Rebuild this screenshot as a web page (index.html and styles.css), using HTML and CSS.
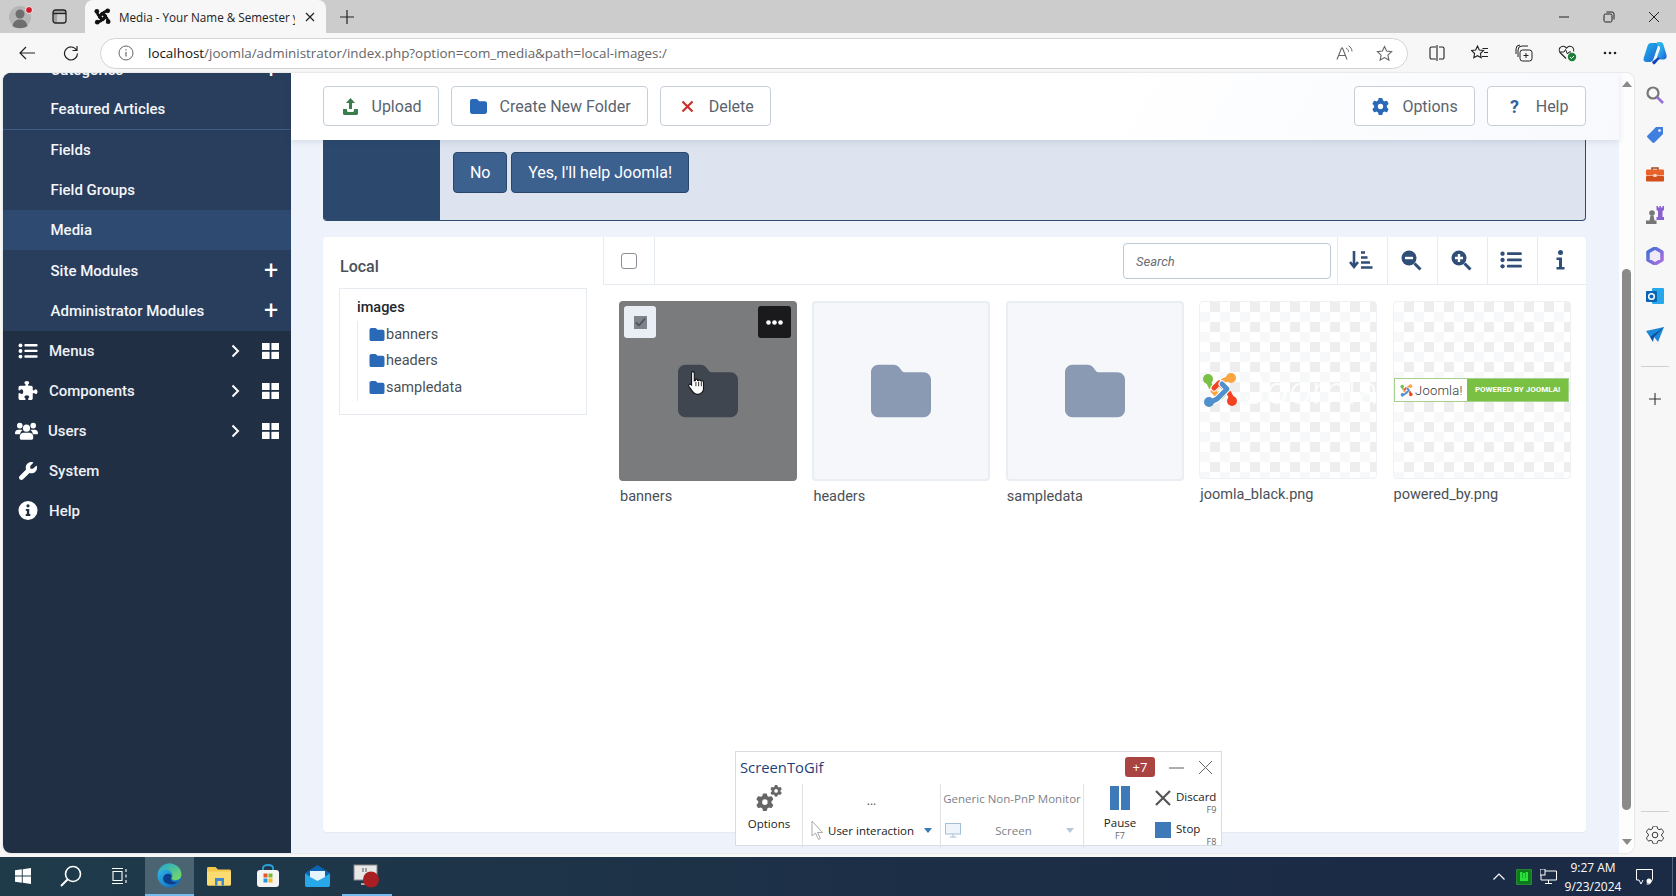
FILE: index.html
```html
<!DOCTYPE html>
<html lang="en">
<head>
<meta charset="utf-8">
<title>Media - Your Name &amp; Semester</title>
<link rel="stylesheet" href="styles.css">
</head>
<body>
<svg class="sprite" aria-hidden="true">
  <defs>
    <linearGradient id="edge-grad" x1="0" y1="0" x2="1" y2="1"><stop offset="0" stop-color="#35c1f1"/><stop offset="1" stop-color="#0a5fb4"/></linearGradient>
    <linearGradient id="edge-top" x1="0" y1="0" x2="1" y2="1"><stop offset="0" stop-color="#1ba5d8"/><stop offset="1" stop-color="#7fdc5a"/></linearGradient>
    <linearGradient id="cop-a" x1="0" y1="0" x2="1" y2="1"><stop offset="0" stop-color="#1db8e8"/><stop offset="1" stop-color="#1e5fd8"/></linearGradient>
    <linearGradient id="cop-b" x1="0" y1="0" x2="1" y2="1"><stop offset="0" stop-color="#25c8e0"/><stop offset=".5" stop-color="#2a9fe8"/><stop offset="1" stop-color="#1b5ad8"/></linearGradient>
    <linearGradient id="m365" x1="0" y1="0" x2="1" y2="1"><stop offset="0" stop-color="#3d6fd8"/><stop offset="1" stop-color="#b06ee0"/></linearGradient>
    <symbol id="i-folder" viewBox="0 0 512 512"><path d="M64 480H448c35.3 0 64-28.7 64-64V160c0-35.3-28.7-64-64-64H288c-10.1 0-19.6-4.7-25.6-12.8L243.2 57.6C231.1 41.5 212.1 32 192 32H64C28.7 32 0 60.7 0 96V416c0 35.3 28.7 64 64 64z"/></symbol>
    <symbol id="i-gear" viewBox="0 0 512 512"><path d="M495.9 166.6c3.2 8.7 .5 18.4-6.4 24.6l-43.3 39.4c1.1 8.3 1.7 16.8 1.7 25.4s-.6 17.1-1.7 25.4l43.3 39.4c6.9 6.2 9.6 15.9 6.4 24.6c-4.4 11.9-9.7 23.3-15.8 34.3l-4.7 8.1c-6.6 11-14 21.4-22.1 31.2c-5.9 7.2-15.7 9.6-24.5 6.8l-55.7-17.7c-13.4 10.3-28.2 18.9-44 25.4l-12.5 57.1c-2 9.1-9 16.3-18.2 17.8c-13.8 2.3-28 3.5-42.5 3.5s-28.7-1.2-42.5-3.5c-9.2-1.5-16.2-8.7-18.2-17.8l-12.5-57.1c-15.8-6.5-30.6-15.1-44-25.4L83.1 425.9c-8.8 2.8-18.6 .3-24.5-6.8c-8.1-9.8-15.5-20.2-22.1-31.2l-4.7-8.1c-6.1-11-11.4-22.4-15.8-34.3c-3.2-8.7-.5-18.4 6.4-24.6l43.3-39.4C64.6 273.1 64 264.6 64 256s.6-17.1 1.7-25.4L22.4 191.2c-6.9-6.2-9.6-15.9-6.4-24.6c4.4-11.9 9.7-23.3 15.8-34.3l4.7-8.1c6.6-11 14-21.4 22.1-31.2c5.9-7.2 15.7-9.6 24.5-6.8l55.7 17.7c13.4-10.3 28.2-18.9 44-25.4l12.5-57.1c2-9.1 9-16.3 18.2-17.8C227.3 1.2 241.5 0 256 0s28.7 1.2 42.5 3.5c9.2 1.5 16.2 8.7 18.2 17.8l12.5 57.1c15.8 6.5 30.6 15.1 44 25.4l55.7-17.7c8.8-2.8 18.6-.3 24.5 6.8c8.1 9.8 15.5 20.2 22.1 31.2l4.7 8.1c6.1 11 11.4 22.4 15.8 34.3zM256 336a80 80 0 1 0 0-160 80 80 0 1 0 0 160z"/></symbol>
    <symbol id="i-list" viewBox="0 0 24 20"><circle cx="2.6" cy="3" r="2.4"/><circle cx="2.6" cy="10" r="2.4"/><circle cx="2.6" cy="17" r="2.4"/><rect x="7.5" y="1.4" width="16.5" height="3" rx="1"/><rect x="7.5" y="8.4" width="16.5" height="3" rx="1"/><rect x="7.5" y="15.4" width="16.5" height="3" rx="1"/></symbol>
    <symbol id="i-puzzle" viewBox="0 0 512 512"><path d="M192 104.8c0-9.2-5.8-17.3-13.2-22.8C167.2 73.3 160 61.3 160 48c0-26.5 28.7-48 64-48s64 21.5 64 48c0 13.3-7.2 25.3-18.8 34c-7.4 5.5-13.2 13.6-13.2 22.8v0c0 12.8 10.4 23.2 23.2 23.2H336c26.5 0 48 21.5 48 48v56.8c0 12.8 10.4 23.2 23.2 23.2v0c9.2 0 17.3-5.8 22.8-13.2c8.7-11.6 20.7-18.8 34-18.8c26.5 0 48 28.7 48 64s-21.5 64-48 64c-13.3 0-25.3-7.2-34-18.8c-5.5-7.4-13.6-13.2-22.8-13.2v0c-12.8 0-23.2 10.4-23.2 23.2V464c0 26.5-21.5 48-48 48H279.2c-12.8 0-23.2-10.4-23.2-23.2v0c0-9.2 5.8-17.3 13.2-22.8c11.6-8.7 18.8-20.7 18.8-34c0-26.5-28.7-48-64-48s-64 21.5-64 48c0 13.3 7.2 25.3 18.8 34c7.4 5.5 13.2 13.6 13.2 22.8v0c0 12.8-10.4 23.2-23.2 23.2H48c-26.5 0-48-21.5-48-48V343.2C0 330.4 10.4 320 23.2 320v0c9.2 0 17.3 5.8 22.8 13.2C54.7 344.8 66.7 352 80 352c26.5 0 48-28.7 48-64s-21.5-64-48-64c-13.3 0-25.3 7.2-34 18.8C40.5 250.2 32.4 256 23.2 256v0C10.4 256 0 245.6 0 232.8V176c0-26.5 21.5-48 48-48H168.8c12.8 0 23.2-10.4 23.2-23.2v0z"/></symbol>
    <symbol id="i-users" viewBox="0 0 24 18"><circle cx="5" cy="3.4" r="2.9"/><circle cx="19" cy="3.4" r="2.9"/><circle cx="12" cy="6" r="3.7"/><path d="M0 11c0-2 1.400-3.400 3.400-3.400h3c.6 0 1.100.1 1.600.4-1.500 1-2.500 2.700-2.600 4.500H1c-.6 0-1-.4-1-1.500zM24 11c0-2-1.400-3.400-3.400-3.400h-3c-.6 0-1.100.1-1.600.4 1.500 1 2.500 2.700 2.600 4.500H23c.6 0 1-.4 1-1.500zM9 10.800h6c2.300 0 4 1.800 4 4V16.500c0 .8-.6 1.500-1.400 1.500H6.400C5.600 18 5 17.300 5 16.500V14.800c0-2.200 1.700-4 4-4z"/></symbol>
    <symbol id="i-wrench" viewBox="0 0 512 512"><path d="M352 320c88.400 0 160-71.600 160-160c0-15.300-2.200-30.100-6.200-44.200c-3.100-10.800-16.400-13.200-24.300-5.300l-76.800 76.800c-3 3-7.100 4.700-11.300 4.700H336c-8.800 0-16-7.200-16-16V118.600c0-4.200 1.700-8.300 4.700-11.300l76.800-76.800c7.900-7.900 5.400-21.200-5.300-24.300C382.100 2.200 367.300 0 352 0C263.600 0 192 71.600 192 160c0 19.100 3.400 37.500 9.500 54.500L19.900 396.100C7.200 408.800 0 426.100 0 444.100C0 481.600 30.400 512 67.900 512c18 0 35.300-7.200 48-19.900L297.500 310.500c17 6.200 35.400 9.500 54.500 9.500z"/></symbol>
    <symbol id="i-info" viewBox="0 0 20 20"><path fill-rule="evenodd" d="M10 0a10 10 0 1 1 0 20a10 10 0 0 1 0-20zM10 3.400a1.700 1.700 0 1 0 0 3.400a1.700 1.700 0 0 0 0-3.400zM7.600 8.400v1.900h1.200v3.500H7.600v1.900h4.900v-1.900h-1.200V8.400z"/></symbol>
    <symbol id="i-grid" viewBox="0 0 17 16"><rect width="7.600" height="7"/><rect x="9.400" width="7.600" height="7"/><rect y="8.800" width="7.600" height="7.200"/><rect x="9.400" y="8.800" width="7.600" height="7.200"/></symbol>
    <symbol id="joomla" viewBox="0 0 36 36"><g fill="none" stroke-linejoin="round" stroke-linecap="round"><path stroke="#fff" stroke-width="7" d="M6 9L9 15L19 25L24 20"/><path stroke="#7ac143" stroke-width="5" d="M6 9L9 15L19 25L24 20"/><path stroke="#fff" stroke-width="7" d="M27 6L21 9L11 19L16 24"/><path stroke="#f9a541" stroke-width="5" d="M27 6L21 9L11 19L16 24"/><path stroke="#fff" stroke-width="7" d="M30 27L27 21L17 11L12 16"/><path stroke="#f44321" stroke-width="5" d="M30 27L27 21L17 11L12 16"/><path stroke="#fff" stroke-width="7" d="M9 30L15 27L25 17L20 12"/><path stroke="#5091cd" stroke-width="5" d="M9 30L15 27L25 17L20 12"/></g><circle cx="6" cy="7" r="5" fill="#7ac143"/><circle cx="29" cy="6" r="5" fill="#f9a541"/><circle cx="30" cy="29" r="5" fill="#f44321"/><circle cx="7" cy="30" r="5" fill="#5091cd"/></symbol>
    <symbol id="joomla-mono" viewBox="0 0 36 36"><g fill="none" stroke-linejoin="round" stroke-linecap="round" stroke="#111" stroke-width="5.500"><path d="M6 9L9 15L19 25L24 20"/><path d="M27 6L21 9L11 19L16 24"/><path d="M30 27L27 21L17 11L12 16"/><path d="M9 30L15 27L25 17L20 12"/></g><circle cx="6" cy="7" r="5" fill="#111"/><circle cx="29" cy="6" r="5" fill="#111"/><circle cx="30" cy="29" r="5" fill="#111"/><circle cx="7" cy="30" r="5" fill="#111"/></symbol>
  </defs>
</svg>

<div class="titlebar">
  <div class="profile">
    <svg width="26" height="28" viewBox="0 0 26 28"><circle cx="11" cy="14" r="11" fill="#b5b5b5"/><circle cx="11" cy="11" r="4.500" fill="#6e6e6e"/><path d="M3.500 23c1-5 4-6.500 7.500-6.500s6.500 1.500 7.500 6.500c-4 3-11 3-15 0z" fill="#6e6e6e"/><circle cx="20" cy="7" r="3.500" fill="#d01c2a" stroke="#eee"/></svg>
  </div>
  <div class="tab-btn">
    <svg width="15" height="15" viewBox="0 0 15 15"><rect x="1" y="1" width="13" height="13" rx="2.500" fill="none" stroke="#222" stroke-width="1.300"/><path d="M1 4.500h13" stroke="#222" stroke-width="1.300" fill="none"/><path d="M1 3.500a2.500 2.500 0 0 1 2.500-2.500h8a2.500 2.500 0 0 1 2.500 2.500v1H5v9.500H3.500A2.500 2.500 0 0 1 1 11.500z" fill="#222" fill-opacity=".25"/></svg>
  </div>
  <div class="tab">
    <svg class="tab-logo" width="17" height="17"><use href="#joomla-mono"/></svg>
    <span class="tab-title">Media - Your Name &amp; Semester y</span>
    <svg class="tab-close" width="10" height="10" viewBox="0 0 10 10"><path d="M1 1l8 8M9 1l-8 8" stroke="#222" stroke-width="1.200"/></svg>
  </div>
  <svg class="new-tab" width="14" height="14" viewBox="0 0 14 14"><path d="M7 0v14M0 7h14" stroke="#222" stroke-width="1.200"/></svg>
  <div class="win-controls">
    <svg width="12" height="12" viewBox="0 0 12 12"><path d="M1 6h10" stroke="#222" stroke-width="1"/></svg>
    <svg width="12" height="12" viewBox="0 0 12 12"><rect x="1" y="3" width="8" height="8" rx="1.500" fill="none" stroke="#222"/><path d="M3.500 1h5.500a2 2 0 0 1 2 2v5.500" fill="none" stroke="#222"/></svg>
    <svg width="12" height="12" viewBox="0 0 12 12"><path d="M1 1l10 10M11 1L1 11" stroke="#222" stroke-width="1"/></svg>
  </div>
</div>

<div class="navbar">
  <svg class="nav-back" width="16" height="14" viewBox="0 0 16 14"><path d="M7 1L1 7l6 6M1 7h15" fill="none" stroke="#222" stroke-width="1.200"/></svg>
  <svg class="nav-reload" width="16" height="16" viewBox="0 0 16 16"><path d="M13.500 5A6.500 6.500 0 1 0 14.500 8.500M14 1v4.500H9.500" fill="none" stroke="#222" stroke-width="1.200"/></svg>
  <div class="addressbar">
    <svg class="addr-info" width="16" height="16" viewBox="0 0 16 16"><circle cx="8" cy="8" r="7" fill="none" stroke="#666"/><path d="M8 7v4.500M8 4.200v1.300" stroke="#666" stroke-width="1.200"/></svg>
    <span class="url"><span class="url-host">localhost</span>/joomla/administrator/index.php?option=com_media&amp;path=local-images:/</span>
    <svg class="addr-read" width="17" height="16" viewBox="0 0 17 16"><path d="M1 14.500L5.500 3h1L11 14.500M2.800 10.500h6.400" fill="none" stroke="#666" stroke-width="1.100"/><path d="M10 3c1.500.8 2.500 2 2.500 3.800M12.500 .8c2 1.200 3.500 3.200 3.500 5.700" fill="none" stroke="#666"/></svg>
    <svg class="addr-star" width="17" height="17" viewBox="0 0 17 17"><path d="M8.500 1.500l2.100 4.600 5 .6-3.700 3.400 1 5-4.400-2.500-4.400 2.500 1-5L1.400 6.700l5-.6z" fill="none" stroke="#666" stroke-width="1.100"/></svg>
  </div>
  <div class="nav-tools">
    <svg width="16" height="16" viewBox="0 0 16 16"><path d="M7 2H2.500A1.500 1.500 0 0 0 1 3.500v9A1.500 1.500 0 0 0 2.500 14H7M10 2h3.500A1.500 1.500 0 0 1 15 3.500v9a1.500 1.500 0 0 1-1.500 1.500H10M8 0v16" fill="none" stroke="#222" stroke-width="1.100"/></svg>
    <svg width="18" height="16" viewBox="0 0 18 16"><path d="M6.500 1l1.800 4 4.200.5-3.100 3 .8 4.300-3.700-2.100-3.700 2.100.8-4.300-3.100-3 4.200-.5z" fill="none" stroke="#222" stroke-width="1.100"/><path d="M11.500 3.500H17M13 7.500h4M11 11.500h6" stroke="#222"/></svg>
    <svg width="18" height="18" viewBox="0 0 18 18"><rect x="5" y="6" width="12" height="11" rx="2.500" fill="none" stroke="#222"/><path d="M11 9v5M8.500 11.500h5" stroke="#222"/><path d="M3 13V6a4 4 0 0 1 4-4h6" fill="none" stroke="#222"/><path d="M1 10V5a4 4 0 0 1 4-4" fill="none" stroke="#222"/></svg>
    <svg width="19" height="18" viewBox="0 0 19 18"><path d="M8 14.500L2.500 9C1 7.500.8 5 2.200 3.500c1.500-1.700 4-1.700 5.500-.2l.8.800.8-.8c1.500-1.500 4-1.500 5.500.2 1 1.100 1.200 2.600.8 4" fill="none" stroke="#222" stroke-width="1.100"/><path d="M2 8h4l1.500-2.500 2 4.500 1.500-2h2" fill="none" stroke="#222"/><circle cx="14" cy="13" r="4.200" fill="#1a7f37"/><path d="M12 13l1.500 1.500 2.500-2.500" fill="none" stroke="#fff"/></svg>
    <svg width="14" height="4" viewBox="0 0 14 4"><circle cx="2" cy="2" r="1.300" fill="#222"/><circle cx="7" cy="2" r="1.300" fill="#222"/><circle cx="12" cy="2" r="1.300" fill="#222"/></svg>
    <svg width="24" height="24" viewBox="0 0 24 24"><path d="M8 2h5c2 0 2.500 1 2 2.500L10.500 18c-.7 2-2 3-4 3H3.500c-2.500 0-3.500-2-2.800-4L4.500 5c.6-1.800 1.800-3 3.500-3z" fill="url(#cop-a)"/><path d="M14 1h3c2 0 3 1 3.500 3l3 10c.6 2.500-.6 4.500-3 4.500h-5c-1.500 0-2-1-1.500-2.500l3-8c.4-1.500-.5-3-2.500-3.500z" fill="url(#cop-b)"/><path d="M9 21l5-4c1-.8 2-.6 3 0l-5 6c-1 .8-2 .3-3-2z" fill="#1144b8"/></svg>
  </div>
</div>

<div class="desktop-area">
  <div class="window">
    <aside class="sidebar">
      <nav class="submenu">
        <a class="sub-item">Categories<span class="plus">+</span></a>
        <a class="sub-item sub-line">Featured Articles</a>
        <a class="sub-item">Fields</a>
        <a class="sub-item">Field Groups</a>
        <a class="sub-item sub-active">Media</a>
        <a class="sub-item">Site Modules<span class="plus">+</span></a>
        <a class="sub-item">Administrator Modules<span class="plus">+</span></a>
      </nav>
      <nav class="mainmenu">
        <a class="main-item"><svg class="side-icon" width="19" height="16"><use href="#i-list"/></svg><span class="main-label">Menus</span>
          <svg class="chev" width="9" height="14" viewBox="0 0 9 14"><path d="M1.500 1.500L7 7l-5.500 5.500" fill="none" stroke="#fff" stroke-width="2"/></svg>
          <svg class="grid-ic" width="17" height="16"><use href="#i-grid"/></svg></a>
        <a class="main-item"><svg class="side-icon" width="19" height="19"><use href="#i-puzzle"/></svg><span class="main-label">Components</span>
          <svg class="chev" width="9" height="14" viewBox="0 0 9 14"><path d="M1.500 1.500L7 7l-5.500 5.500" fill="none" stroke="#fff" stroke-width="2"/></svg>
          <svg class="grid-ic" width="17" height="16"><use href="#i-grid"/></svg></a>
        <a class="main-item"><svg class="side-icon users-ic" width="23" height="18"><use href="#i-users"/></svg><span class="main-label">Users</span>
          <svg class="chev" width="9" height="14" viewBox="0 0 9 14"><path d="M1.500 1.500L7 7l-5.500 5.500" fill="none" stroke="#fff" stroke-width="2"/></svg>
          <svg class="grid-ic" width="17" height="16"><use href="#i-grid"/></svg></a>
        <a class="main-item"><svg class="side-icon" width="18" height="18"><use href="#i-wrench"/></svg><span class="main-label">System</span></a>
        <a class="main-item"><svg class="side-icon" width="19" height="19"><use href="#i-info"/></svg><span class="main-label">Help</span></a>
      </nav>
    </aside>

    <main class="main">
      <header class="actions">
        <button class="btn"><svg class="ic-upload" width="17" height="17" viewBox="0 0 17 17"><path d="M8.500 0l4.500 5H10v6H7V5H4z" fill="#3a7d4f"/><path d="M1 11h4v1.500c0 .8.700 1.500 1.500 1.500h4c.8 0 1.500-.7 1.500-1.500V11h3.300c.4 0 .7.300.7.700V15.500c0 .8-.7 1.500-1.500 1.500h-12C1.700 17 1 16.300 1 15.500z" fill="#3a7d4f"/></svg>Upload</button>
        <button class="btn"><svg class="ic-blue" width="17" height="17"><use href="#i-folder"/></svg>Create New Folder</button>
        <button class="btn"><svg width="17" height="17" viewBox="0 0 17 17"><path d="M3.500 3.500l10 10M13.500 3.500l-10 10" stroke="#c9302c" stroke-width="2.200"/></svg>Delete</button>
        <div class="actions-right">
          <button class="btn"><svg class="ic-blue" width="17" height="17"><use href="#i-gear"/></svg>Options</button>
          <button class="btn"><svg width="17" height="17" viewBox="0 0 17 17"><text x="4" y="15" class="help-q">?</text></svg>Help</button>
        </div>
      </header>

      <section class="alert">
        <div class="alert-side"></div>
        <div class="alert-body">
          <button class="alert-btn">No</button>
          <button class="alert-btn">Yes, I'll help Joomla!</button>
        </div>
      </section>

      <section class="card">
        <div class="tree-col">
          <h2 class="tree-title">Local</h2>
          <div class="tree">
            <div class="tree-root">images</div>
            <ul class="tree-list">
              <li class="tree-row"><svg class="ic-tree" width="16" height="15"><use href="#i-folder"/></svg>banners</li>
              <li class="tree-row"><svg class="ic-tree" width="16" height="15"><use href="#i-folder"/></svg>headers</li>
              <li class="tree-row"><svg class="ic-tree" width="16" height="15"><use href="#i-folder"/></svg>sampledata</li>
            </ul>
          </div>
        </div>
        <div class="browser">
          <div class="browser-bar">
            <div class="check-cell"><span class="checkbox"></span></div>
            <div class="crumb"></div>
            <input class="search" type="text" placeholder="Search">
            <div class="tool"><svg width="24" height="20" viewBox="0 0 24 20"><path d="M5 1v15M1 12l4 5 4-5" fill="none" stroke="#2f4e78" stroke-width="2.600"/><path d="M12 2.500h4M12 7.500h6.500M12 12.500h9M12 17.500h11.500" stroke="#2f4e78" stroke-width="2.400"/></svg></div>
            <div class="tool"><svg width="22" height="22" viewBox="0 0 22 22"><circle cx="9" cy="9" r="7.500" fill="#2f4e78"/><path d="M5 9h8" stroke="#fff" stroke-width="2.400"/><path d="M14.500 14.500L20.500 20.500" stroke="#2f4e78" stroke-width="3"/></svg></div>
            <div class="tool"><svg width="22" height="22" viewBox="0 0 22 22"><circle cx="9" cy="9" r="7.500" fill="#2f4e78"/><path d="M5 9h8M9 5v8" stroke="#fff" stroke-width="2.400"/><path d="M14.500 14.500L20.500 20.500" stroke="#2f4e78" stroke-width="3"/></svg></div>
            <div class="tool"><svg class="ic-navy" width="22" height="18"><use href="#i-list"/></svg></div>
            <div class="tool tool-last"><svg width="9" height="20" viewBox="0 0 9 20"><circle cx="4.500" cy="2.600" r="2.500" fill="#2f4e78"/><path d="M.5 7.500h5.500v9.500h2.500v2.500H.5V17H3V10H.5z" fill="#2f4e78"/></svg></div>
          </div>
          <div class="items">
            <figure class="item">
              <div class="thumb thumb-folder thumb-selected">
                <span class="item-check"><svg width="13" height="13" viewBox="0 0 13 13"><rect width="13" height="13" fill="#7f838c"/><path d="M2 6.500l3 3 6-7" fill="none" stroke="#4f545c" stroke-width="1.800"/></svg></span>
                <span class="item-menu"><svg width="17" height="5" viewBox="0 0 17 5"><circle cx="2.500" cy="2.500" r="2.300" fill="#fff"/><circle cx="8.500" cy="2.500" r="2.300" fill="#fff"/><circle cx="14.500" cy="2.500" r="2.300" fill="#fff"/></svg></span>
                <svg class="folder-big" width="60" height="60"><use href="#i-folder"/></svg>
                <svg class="hand" width="20" height="26" viewBox="0 0 18 24"><path d="M5 1.500c.8 0 1.500.7 1.500 1.500v7l1-.3V9c0-.8 1.800-.8 2 0v.7l1 .1c.3-.8 1.800-.7 2 .2l1 .3c.6-.4 1.500 0 1.500 1V17c0 2.500-2 5.500-5 5.500H9c-2 0-3-1-4-2.500l-3.500-5c-.8-1.500 1-2.500 2-1.500l.5.500V3c0-.8.200-1.500 1-1.500z" fill="#fff" stroke="#111" stroke-width="1"/><path d="M8 11v4M10.500 11v4M13 11v4" stroke="#111" stroke-width=".8"/></svg>
              </div>
              <figcaption class="caption">banners</figcaption>
            </figure>
            <figure class="item">
              <div class="thumb thumb-folder"><svg class="folder-big" width="60" height="60"><use href="#i-folder"/></svg></div>
              <figcaption class="caption">headers</figcaption>
            </figure>
            <figure class="item">
              <div class="thumb thumb-folder"><svg class="folder-big" width="60" height="60"><use href="#i-folder"/></svg></div>
              <figcaption class="caption">sampledata</figcaption>
            </figure>
            <figure class="item">
              <div class="thumb thumb-image">
                <svg class="jl-logo" width="36" height="36"><use href="#joomla"/></svg>
                <span class="jl-ghost">Joomla!</span>
              </div>
              <figcaption class="caption">joomla_black.png</figcaption>
            </figure>
            <figure class="item">
              <div class="thumb thumb-image">
                <div class="powered">
                  <div class="powered-left"><svg width="13" height="13"><use href="#joomla"/></svg><span class="powered-word">Joomla!</span></div>
                  <div class="powered-right">POWERED BY JOOMLA!</div>
                </div>
              </div>
              <figcaption class="caption">powered_by.png</figcaption>
            </figure>
          </div>
        </div>
      </section>
    </main>

    <div class="scrollbar">
      <span class="arrow-up"></span>
      <span class="scroll-thumb"></span>
      <span class="arrow-down"></span>
    </div>
  </div>

  <aside class="edge-rail">
    <svg width="18" height="18" viewBox="0 0 18 18"><circle cx="7" cy="7" r="5.500" fill="none" stroke="#777" stroke-width="2.200"/><path d="M11 11l6 6" stroke="#9a6ed8" stroke-width="2.600"/></svg>
    <svg width="18" height="18" viewBox="0 0 18 18"><path d="M10 1h6.500c.4 0 .5.200.5.500V8L8.500 16.500c-.6.600-1.400.6-2 0L1.500 11.500c-.6-.6-.6-1.400 0-2z" fill="#3f7fe0"/><circle cx="13.500" cy="4.500" r="1.300" fill="#fff"/></svg>
    <svg width="18" height="16" viewBox="0 0 18 16"><path d="M6 4V2h6v2" fill="none" stroke="#a34a1f" stroke-width="1.500"/><rect y="3.500" width="18" height="6" rx="1" fill="#e8622a"/><rect y="10" width="18" height="5.500" rx="1" fill="#d24f1c"/><rect x="7.500" y="8" width="3" height="3" fill="#ffd9c2"/></svg>
    <svg width="18" height="20" viewBox="0 0 18 20"><circle cx="6" cy="8" r="2.800" fill="#777"/><path d="M4.500 10.500h3l1 5h2v3.500H0v-3.500h3.500z" fill="#777"/><path d="M10.500 1h1.500v1.500h1.500V1H15v1.500h1.500V1H18v4l-1.500 1v6H18v3h-7.500v-3H12V6l-1.500-1z" fill="#8a5fd0"/></svg>
    <svg width="18" height="18" viewBox="0 0 18 18"><path d="M9 1l7 4v8l-7 4-7-4V5z" fill="#f0eaf8" stroke="url(#m365)" stroke-width="3.500" stroke-linejoin="round"/></svg>
    <svg width="18" height="18" viewBox="0 0 18 18"><rect x="6" y="1" width="12" height="16" rx="1" fill="#28a8ea"/><rect y="4" width="11" height="11" rx="1" fill="#0a64b4"/><circle cx="5.500" cy="9.500" r="2.800" fill="none" stroke="#fff" stroke-width="1.500"/></svg>
    <svg width="18" height="16" viewBox="0 0 18 16"><path d="M0 4L18 0 12 15 8 10 4 10z" fill="#1e88d8"/><path d="M4 10L18 0 8 10l-1 5z" fill="#0b4f9c"/></svg>
    <span class="rail-sep"></span>
    <svg class="rail-plus" width="14" height="14" viewBox="0 0 14 14"><path d="M7 1v12M1 7h12" stroke="#333" stroke-width="1.100"/></svg>
    <span class="rail-sep rail-sep-bottom"></span>
    <svg class="rail-gear" width="18" height="18"><use href="#i-gear" class="ic-outline"/></svg>
  </aside>

  <div class="recorder">
    <div class="rec-head">
      <span class="rec-title">ScreenToGif</span>
      <span class="rec-badge">+7</span>
      <svg width="15" height="15" viewBox="0 0 15 15"><path d="M0 8h15" stroke="#777" stroke-width="1.200"/></svg>
      <svg width="15" height="15" viewBox="0 0 15 15"><path d="M1 1l13 13M14 1L1 14" stroke="#666"/></svg>
    </div>
    <div class="rec-body">
      <div class="rec-sec rec-options">
        <svg width="26" height="26" viewBox="0 0 22 22" class="ic-gray"><use href="#i-gear" x="0" y="7" width="15" height="15"/><use href="#i-gear" x="12" y="0" width="10" height="10"/></svg>
        <span class="rec-label">Options</span>
      </div>
      <div class="rec-sec rec-capture">
        <span class="rec-dots">...</span>
        <div class="rec-line">
          <svg width="13" height="20" viewBox="0 0 13 20"><path d="M1 1v15l3.500-3 3 6.500 2-1-3-6h5z" fill="#fff" stroke="#aaa"/></svg>
          <span class="rec-user">User interaction</span>
          <span class="tri tri-blue"></span>
        </div>
      </div>
      <div class="rec-sec rec-monitor">
        <span class="rec-gray rec-gen">Generic Non-PnP Monitor</span>
        <div class="rec-line">
          <svg width="16" height="15" viewBox="0 0 16 15"><rect x=".5" y=".5" width="15" height="10.500" fill="#eef4fa" stroke="#a5bfd6"/><path d="M8 11v3M4.500 14h7" stroke="#a5bfd6"/></svg>
          <span class="rec-gray rec-screen">Screen</span>
          <span class="tri tri-pale"></span>
        </div>
      </div>
      <div class="rec-sec rec-pause">
        <div class="pause-bars"><span class="pause-bar"></span><span class="pause-bar"></span></div>
        <span class="rec-label">Pause</span>
        <span class="rec-key">F7</span>
      </div>
      <div class="rec-sec rec-actions">
        <div class="rec-act">
          <svg width="16" height="16" viewBox="0 0 16 16"><path d="M1 1l14 14M15 1L1 15" stroke="#555" stroke-width="2.200"/></svg>
          <div class="rec-act-text"><span class="rec-label">Discard</span><span class="rec-key">F9</span></div>
        </div>
        <div class="rec-act">
          <span class="stop-sq"></span>
          <div class="rec-act-text"><span class="rec-label">Stop</span><span class="rec-key">F8</span></div>
        </div>
      </div>
    </div>
  </div>
</div>

<footer class="taskbar">
  <div class="task-slot task-start"><svg width="16" height="16" viewBox="0 0 16 16"><path d="M0 2.300L6.800 1.300v6.200H0zM7.700 1.200L16 0v7.500H7.700zM0 8.400h6.800v6.300L0 13.700zM7.700 8.400H16V16l-8.300-1.200z" fill="#fff"/></svg></div>
  <div class="task-slot"><svg width="22" height="22" viewBox="0 0 22 22"><circle cx="13" cy="9" r="7.500" fill="none" stroke="#fff" stroke-width="1.600"/><path d="M7.500 14.500L1 21" stroke="#fff" stroke-width="2"/></svg></div>
  <div class="task-slot"><svg width="16" height="16" viewBox="0 0 16 16"><path d="M0 .5h11M0 15.500h11M1 3.500h9v9H1zM14 1v3M14 6.500v3M14 12v3" fill="none" stroke="#fff" stroke-width="1.100"/></svg></div>
  <div class="task-slot task-active"><svg width="25" height="25" viewBox="0 0 24 24"><circle cx="12" cy="12" r="11.500" fill="url(#edge-grad)"/><path d="M.8 11C2 4.500 7 .5 12 .5c6.500 0 11.500 5 11.500 10.500 0 3.500-3 5.500-6 5.500-2 0-3.500-.8-3.500-1.800 0-.5.800-1 .8-2.700 0-3-2.800-5.500-6-5.500-4 0-7 1.500-8.500 4.500z" fill="url(#edge-top)"/><path d="M8 19c-2.500-2-3-6 0-8 2-1.300 5-.8 6 1 .5 1-.5 1.500-.5 3 0 2.500 3 4 6 3-2 3-7 3.500-11.500 1z" fill="#0c3f8c"/></svg></div>
  <div class="task-slot"><svg width="24" height="20" viewBox="0 0 24 20"><path d="M0 2.500C0 1.500.8 1 1.500 1h7l2.500 2.500h11.500c.8 0 1.500.6 1.500 1.500v13c0 .8-.7 1.500-1.500 1.500h-21C.7 19.500 0 18.800 0 18z" fill="#f5c84b"/><path d="M0 5.500h24V18c0 .8-.7 1.500-1.500 1.500h-21C.7 19.500 0 18.800 0 18z" fill="#fbdc72"/><rect x="8" y="12" width="9" height="7.500" fill="#3f88d0"/><rect x="10.500" y="15" width="4" height="4.500" fill="#fbdc72"/></svg></div>
  <div class="task-slot"><svg width="24" height="24" viewBox="0 0 24 24"><path d="M7 7V4c0-2 2-3 5-3s5 1 5 3v3" fill="none" stroke="#2aa0dc" stroke-width="1.800"/><rect x="1" y="6" width="22" height="17" rx="3" fill="#f4f4f4"/><rect x="7.500" y="9.500" width="4" height="4" fill="#e8562a"/><rect x="12.500" y="9.500" width="4" height="4" fill="#7cb82f"/><rect x="7.500" y="14.500" width="4" height="4" fill="#1d9be0"/><rect x="12.500" y="14.500" width="4" height="4" fill="#f5b921"/></svg></div>
  <div class="task-slot"><svg width="25" height="22" viewBox="0 0 25 22"><path d="M12.500 0L25 8v12c0 1-.8 2-2 2H2c-1.200 0-2-1-2-2V8z" fill="#0a64b4"/><path d="M0 8.500l12.500 7.500L25 8.500V20c0 1-.8 2-2 2H2c-1.200 0-2-1-2-2z" fill="#27a8e8"/><path d="M5 6h15v6l-7.500 4L5 12z" fill="#e6f4fc"/></svg></div>
  <div class="task-slot task-open"><svg width="27" height="24" viewBox="0 0 27 24"><rect x="1" y="1" width="23" height="15" fill="#e8e8e8" stroke="#888"/><path d="M10 4v4M13 4v4" stroke="#555"/><path d="M8 20h8" stroke="#aaa" stroke-width="2"/><circle cx="18" cy="15.500" r="8" fill="#a81e22"/></svg></div>
  <div class="tray">
    <svg class="tray-chev" width="12" height="7" viewBox="0 0 12 7"><path d="M.5 6.500L6 1l5.500 5.500" fill="none" stroke="#fff" stroke-width="1.200"/></svg>
    <svg width="16" height="16" viewBox="0 0 16 16"><rect width="16" height="16" rx="3" fill="#0e7a1c" stroke="#3fa04a" stroke-width=".8"/><path d="M4 3v9h8V3h-2.500v6H9V4H7v5h-.5V3z" fill="#27e03a"/></svg>
    <svg width="17" height="15" viewBox="0 0 17 15"><path d="M4 2h12.500v9H1V2M8.500 11v3M5 14.500h7" fill="none" stroke="#fff"/><rect x="0" y="0" width="5" height="6" fill="#1b2a45" stroke="#fff"/></svg>
    <div class="clock"><span>9:27 AM</span><span>9/23/2024</span></div>
    <svg class="tray-note" width="17" height="16" viewBox="0 0 17 16"><path d="M.5.500h16v10l-3 4.500h-3M.5.500v10.500h2.500l2 4 2-4" fill="none" stroke="#fff"/><circle cx="13" cy="12" r="2.500" fill="#fff"/></svg>
  </div>
</footer>
</body>
</html>
```
FILE: styles.css
```css
* { box-sizing: border-box; }
html, body { margin: 0; padding: 0; }
body {
  width: 1676px;
  height: 896px;
  overflow: hidden;
  display: flex;
  flex-direction: column;
  font-family: Roboto, "Liberation Sans", sans-serif;
  background: #f7f7f7;
  color: #495057;
}
.sprite { position: absolute; width: 0; height: 0; }

/* Browser chrome */
.titlebar {
  height: 33px;
  background: #cccccc;
  display: flex;
  align-items: flex-end;
  flex: none;
}
.profile { width: 46px; height: 33px; padding: 3px 0 0 9px; }
.tab-btn { width: 39px; height: 33px; display: flex; align-items: center; justify-content: center; padding-right: 12px; }
.tab {
  width: 241px;
  height: 33px;
  background: #f7f7f7;
  border-radius: 8px 8px 0 0;
  display: flex;
  align-items: center;
  padding-left: 9px;
  font: 11.7px "Open Sans", "Noto Sans", sans-serif;
  color: #222;
}
.tab-logo { flex: none; margin-right: 8px; }
.tab-title { width: 176px; white-space: nowrap; overflow: hidden; }
.tab-close { margin-left: 10px; flex: none; }
.new-tab { margin: 0 0 9px 14px; }
.win-controls { margin-left: auto; height: 33px; display: flex; align-items: center; padding-right: 16px; gap: 33px; }

.navbar {
  height: 40px;
  background: #f7f7f7;
  flex: none;
  display: flex;
  align-items: center;
}
.nav-back { margin-left: 19px; flex: none; }
.nav-reload { margin-left: 28px; flex: none; }
.addressbar {
  margin-left: 21px;
  width: 1308px;
  height: 31px;
  border: 1px solid #d4d4d4;
  border-radius: 16px;
  background: #fff;
  display: flex;
  align-items: center;
  padding-left: 17px;
  flex: none;
}
.addr-info { flex: none; }
.url { margin-left: 14px; font: 13.4px "Open Sans", "Noto Sans", sans-serif; color: #666; white-space: nowrap; }
.url-host { color: #111; }
.addr-read { margin-left: auto; flex: none; }
.addr-star { margin: 0 14px 0 23px; flex: none; }
.nav-tools { flex: 1; display: flex; align-items: center; justify-content: space-between; padding: 0 9px 0 21px; }

/* Window content */
.desktop-area { position: relative; flex: none; height: 784px; display: flex; }
.window {
  margin: 0 0 4px 3px;
  width: 1631px;
  height: 780px;
  background: #eef3fb;
  border-radius: 8px;
  display: flex;
  overflow: hidden;
  box-shadow: 0 0 2px rgba(0,0,0,.2);
}

.sidebar { width: 288px; background: #212f45; flex: none; overflow: hidden; color: #fff; font-size: 15px; font-weight: 500; }
.submenu { margin-top: -23.5px; background: #293d5c; }
.sub-item { height: 40.2px; display: flex; align-items: center; padding: 0 10px 0 47.5px; color: #f4f6fa; }
.sub-line { border-bottom: 1px solid #3f5c87; }
.sub-active { background: #2f4a70; }
.plus { margin-left: auto; font-size: 25px; font-weight: 400; line-height: 1; width: 20px; text-align: center; color: #fff; }
.mainmenu { display: flex; flex-direction: column; }
.main-item { height: 40px; display: flex; align-items: center; color: #eef1f6; }
.side-icon { width: 20px; margin-left: 15px; fill: #fff; flex: none; }
.users-ic { width: 23px; margin-left: 12px; margin-right: -1px; }
.main-label { margin-left: 11px; flex: 1; }
.chev { flex: none; margin-right: 22px; }
.grid-ic { flex: none; margin-right: 12px; fill: #fff; }

.main { flex: 1; min-width: 0; padding: 0 33px 0 32px; display: flex; flex-direction: column; }
.actions {
  margin: 0 -33px 0 -32px;
  padding: 13px 33px 14px 32px;
  height: 67px;
  flex: none;
  background: linear-gradient(120deg, #fff 60%, #f7f9fd);
  box-shadow: 0 2px 6px rgba(40,60,90,.12);
  display: flex;
  gap: 12px;
  position: relative;
  z-index: 2;
}
.actions-right { margin-left: auto; display: flex; gap: 12px; }
.btn {
  height: 40px;
  border: 1px solid #c6ced9;
  border-radius: 4px;
  background: #fff;
  color: #5a646f;
  font: 16px Roboto, sans-serif;
  display: flex;
  align-items: center;
  gap: 13px;
  padding: 0 16.5px 0 17.5px;
}
.ic-blue { fill: #2a69b8; }
.help-q { font: bold 18px Roboto, sans-serif; fill: #2f5f9e; }

.alert {
  height: 81px;
  flex: none;
  display: flex;
  background: #dde4f0;
  border-bottom: 1px solid #2f4a70;
  border-right: 1px solid #2f4a70;
  border-radius: 0 0 4px 4px;
  overflow: hidden;
}
.alert-side { width: 117px; background: #2c486d; flex: none; }
.alert-body { padding: 12px 0 0 13px; display: flex; gap: 4px; align-items: flex-start; }
.alert-btn {
  height: 41px;
  padding: 0 15.9px;
  background: #3d618f;
  border: 1px solid #2a466b;
  border-radius: 4px;
  color: #fff;
  font: 16px Roboto, sans-serif;
}

.card {
  margin-top: 16px;
  height: 595px;
  flex: none;
  background: #fff;
  border-radius: 4px;
  display: flex;
  box-shadow: 0 1px 2px rgba(40,60,90,.06);
}
.tree-col { width: 280px; padding: 19px 16px 0; flex: none; }
.tree-title { margin: 0 0 10px 1px; font: 500 16px/22px Roboto, sans-serif; color: #495057; }
.tree { height: 127px; border: 1px solid #e6ebf2; padding: 9px 0 0 17px; }
.tree-root { font: 500 14.5px/20px Roboto, sans-serif; color: #22272e; }
.tree-list { list-style: none; margin: 3px 0 0; padding: 0; border-left: 1px solid #e6ebf2; }
.tree-row { height: 26.500px; display: flex; align-items: center; font: 14.5px Roboto, sans-serif; color: #495057; gap: 1px; padding-left: 11px; }
.ic-tree { fill: #2a69b8; flex: none; }

.browser { flex: 1; min-width: 0; display: flex; flex-direction: column; }
.browser-bar { height: 48px; border-bottom: 1px solid #e6ebf2; border-left: 1px solid #e6ebf2; display: flex; align-items: stretch; }
.check-cell { width: 51px; border-right: 1px solid #e6ebf2; display: flex; align-items: center; justify-content: center; flex: none; }
.checkbox { width: 16px; height: 16px; border: 1px solid #8a8f96; border-radius: 3px; background: #fff; }
.crumb { flex: 1; }
.search {
  width: 208px;
  height: 36px;
  margin: 6px 6px 0 0;
  border: 1px solid #bcc8d8;
  border-radius: 4px;
  padding: 0 12px;
  font: italic 13px Roboto, sans-serif;
  color: #666;
  outline: none;
}
.search::placeholder { color: #6a6f76; opacity: 1; }
.tool { width: 50px; border-left: 1px solid #e6ebf2; display: flex; align-items: center; justify-content: center; flex: none; padding: 0 3px 2px 0; }
.tool-last { width: 49px; }
.ic-navy { fill: #2f4e78; }

.items { padding: 16px 0 0 16px; display: grid; grid-template-columns: repeat(5, 178px); column-gap: 15.4px; align-items: start; }
.item { margin: 0; }
.thumb { position: relative; display: flex; align-items: center; justify-content: center; border-radius: 4px; }
.thumb-folder { height: 180px; background: #f5f7fa; border: 2px solid #e9eef5; fill: #8a9ab3; }
.thumb-selected { background: #7a7b7d; border-color: #7a7b7d; fill: #3f4650; }
.folder-big { display: block; }
.thumb-image {
  height: 178px;
  border: 1px solid #eef1f5;
  background-color: #fff;
  background-image: conic-gradient(#eeeeee 25%, #fff 0 50%, #f6f8fa 0 75%, #fff 0);
  background-size: 20px 20px;
  overflow: hidden;
}
.item-check {
  position: absolute; left: 3px; top: 3px;
  width: 32px; height: 32px;
  background: #eaeef5;
  border-radius: 3px;
  display: flex; align-items: center; justify-content: center;
}
.item-menu {
  position: absolute; right: 4px; top: 3px;
  width: 33px; height: 32px;
  background: #1a1a1c;
  border-radius: 3px;
  display: flex; align-items: center; justify-content: center;
}
.hand { position: absolute; left: 66px; top: 67px; }
.caption { margin-top: 6px; font: 14.5px/20px Roboto, sans-serif; color: #495057; padding-left: 1px; white-space: nowrap; }

.jl-logo { position: absolute; left: 2px; top: 70px; }
.jl-ghost { position: absolute; left: 44px; top: 70px; font: 300 38px/38px Roboto, sans-serif; color: rgba(255,255,255,.9); letter-spacing: 1.5px; white-space: nowrap; }
.powered { width: 175px; height: 24px; display: flex; border: 1px solid #a6d08f; background: #fff; }
.powered-left { width: 72px; display: flex; align-items: center; gap: 2px; padding-left: 5px; background: #fff; }
.powered-word { font: 300 13px Roboto, sans-serif; color: #333; letter-spacing: .2px; }
.powered-right { flex: 1; background: #7ac143; color: #fff; font: bold 8px/22px Roboto, sans-serif; text-align: center; white-space: nowrap; }

/* Scrollbar */
.scrollbar { width: 15px; background: #fdfdfd; flex: none; position: relative; }
.arrow-up { position: absolute; left: 3px; top: 8px; border: 5px solid transparent; border-top: 0; border-bottom: 6px solid #8a8a8a; }
.arrow-down { position: absolute; left: 3px; bottom: 8px; border: 5px solid transparent; border-bottom: 0; border-top: 6px solid #8a8a8a; }
.scroll-thumb { position: absolute; left: 3px; top: 196px; width: 9px; height: 541px; background: #8a8a8a; border-radius: 5px; }

.edge-rail { width: 42px; flex: none; display: flex; flex-direction: column; align-items: center; gap: 22.2px; padding-top: 13px; }
.rail-sep { width: 28px; height: 1px; background: #d0d0d0; flex: none; margin-top: 1px; }
.rail-plus { margin-top: 2px; }
.rail-sep-bottom { margin-top: auto; margin-bottom: -8px; }
.rail-gear { margin-bottom: 13px; }
.ic-outline { fill: #f7f7f7; stroke: #333; stroke-width: 28; }

/* ScreenToGif recorder, floating over the page */
.recorder {
  position: absolute;
  left: 735px;
  top: 678px;
  width: 487px;
  height: 95px;
  background: #fff;
  border: 1px solid #d9dce1;
  display: flex;
  flex-direction: column;
  font-family: "Open Sans", "Noto Sans", sans-serif;
  color: #222;
  z-index: 5;
}
.rec-head { height: 30px; flex: none; display: flex; align-items: center; padding: 0 8px 0 4px; gap: 14px; }
.rec-title { font-size: 14.8px; color: #1f3f78; margin-right: auto; }
.rec-badge { width: 30px; height: 20px; background: #a94442; color: #fff; border-radius: 3px; font-size: 13px; text-align: center; line-height: 20px; }
.rec-body { flex: 1; display: flex; padding: 2px 0 1px; }
.rec-sec { border-right: 1px solid #dfe2e6; display: flex; flex-direction: column; align-items: center; flex: none; }
.rec-options { width: 67px; padding-top: 1px; gap: 6px; }
.ic-gray { fill: #666; display: block; }
.rec-label { font-size: 11.5px; line-height: 14px; color: #222; }
.rec-capture { width: 138px; padding: 10px 0 0; gap: 12px; align-items: stretch; }
.rec-dots { text-align: center; font-size: 12px; line-height: 14px; color: #555; }
.rec-line { display: flex; align-items: center; padding: 0 8px 0 8px; }
.rec-user { font-size: 11.5px; margin-left: 4px; flex: 1; white-space: nowrap; }
.tri { width: 0; height: 0; border: 4px solid transparent; border-bottom: 0; border-top: 5px solid #3b78b5; flex: none; }
.tri-pale { border-top-color: #b4c9de; }
.rec-monitor { width: 143px; padding-top: 8px; gap: 17px; align-items: stretch; }
.rec-monitor .rec-line { padding: 0 9px 0 4px; }
.rec-gen { font-size: 11.5px; text-align: center; white-space: nowrap; line-height: 14px; }
.rec-gray { color: #7d828a; }
.rec-screen { font-size: 11.5px; flex: 1; text-align: center; }
.rec-pause { width: 71px; border-right: 0; padding: 2px 0 0 1px; }
.pause-bars { display: flex; gap: 2px; margin-bottom: 6px; }
.pause-bar { width: 9px; height: 24px; background: #3f7ab8; }
.rec-key { font-size: 9px; line-height: 11px; color: #666; text-align: right; }
.rec-actions { border-right: 0; flex: 1; align-items: stretch; padding: 6px 5px 0 0; gap: 6px; }
.rec-act { display: flex; align-items: flex-start; gap: 5px; height: 26px; }
.rec-act-text { flex: 1; display: flex; flex-direction: column; }
.stop-sq { width: 16px; height: 16px; background: #3f7ab8; flex: none; }

/* Taskbar */
.taskbar {
  height: 39px;
  flex: none;
  background: linear-gradient(90deg, #1f3b4a, #1c2d46 60%, #1b2a45);
  display: flex;
  align-items: stretch;
}
.task-slot { width: 49.300px; display: flex; align-items: center; justify-content: center; flex: none; border-bottom: 2px solid transparent; }
.task-start { width: 46.500px; }
.task-active { background: #4a6472; border-bottom-color: #76b9ed; }
.task-open { border-bottom-color: #76b9ed; }
.tray { margin-left: auto; margin-right: 3px; display: flex; align-items: center; gap: 8px; color: #fff; padding-right: 19px; border-right: 1px solid #56667e; }
.tray-chev { margin-right: 3px; }
.clock { width: 56px; display: flex; flex-direction: column; align-items: center; font: 12px/19px "Open Sans", "Noto Sans", sans-serif; white-space: nowrap; }
.tray-note { margin-left: 7px; }
```
